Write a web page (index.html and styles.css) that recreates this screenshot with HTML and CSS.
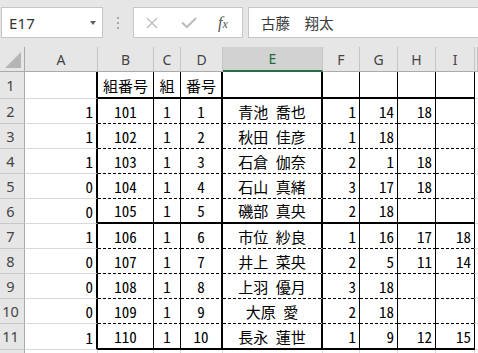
FILE: index.html
```html
<!DOCTYPE html>
<html lang="ja">
<head>
<meta charset="utf-8">
<link rel="stylesheet" href="styles.css">
</head>
<body>
<div class="app">
  <div class="fbar">
    <div class="namebox"><span class="ref">E17</span><span class="dd"></span></div>
    <div class="grip"><i></i><i></i><i></i></div>
    <div class="btns">
      <svg class="ic" width="12" height="12" viewBox="0 0 12 12"><path d="M1 1L11 11M11 1L1 11" stroke="#bdbdbd" stroke-width="1.4" fill="none"/></svg>
      <svg class="ic" width="16" height="12" viewBox="0 0 16 12"><path d="M1 5.5L6 10L15 1" stroke="#bdbdbd" stroke-width="2" fill="none"/></svg>
      <span class="fx"><i>f</i><i class="x">x</i></span>
    </div>
    <div class="formula">古藤　翔太</div>
  </div>

  <div class="sheet">
    <div class="row hdr">
      <div class="c corner"></div>
      <div class="c ch">A</div><div class="c ch">B</div><div class="c ch">C</div><div class="c ch">D</div>
      <div class="c ch sel">E</div><div class="c ch">F</div><div class="c ch">G</div><div class="c ch">H</div><div class="c ch">I</div><div class="c ch"></div>
    </div>
    <div class="row r1">
      <div class="c rh">1</div>
      <div class="c tk bg"></div><div class="c tn bt ctr">組番号</div><div class="c tn bt ctr">組</div><div class="c tk bt ctr">番号</div>
      <div class="c tk bt"></div><div class="c tn bt"></div><div class="c tn bt"></div><div class="c tn bt"></div><div class="c tn bt"></div><div class="c"></div>
    </div>
    <div class="row">
      <div class="c rh">2</div>
      <div class="c tk rt">1</div><div class="c tn bd ctr">101</div><div class="c tn bd ctr">1</div><div class="c tk bd ctr">1</div>
      <div class="c tk bd ctr">青池　喬也</div><div class="c tn bd rt">1</div><div class="c tn bd rt">14</div><div class="c tn bd rt">18</div><div class="c tn bd rt"></div><div class="c"></div>
    </div>
    <div class="row">
      <div class="c rh">3</div>
      <div class="c tk rt">1</div><div class="c tn bd ctr">102</div><div class="c tn bd ctr">1</div><div class="c tk bd ctr">2</div>
      <div class="c tk bd ctr">秋田　佳彦</div><div class="c tn bd rt">1</div><div class="c tn bd rt">18</div><div class="c tn bd rt"></div><div class="c tn bd rt"></div><div class="c"></div>
    </div>
    <div class="row">
      <div class="c rh">4</div>
      <div class="c tk rt">1</div><div class="c tn bd ctr">103</div><div class="c tn bd ctr">1</div><div class="c tk bd ctr">3</div>
      <div class="c tk bd ctr">石倉　伽奈</div><div class="c tn bd rt">2</div><div class="c tn bd rt">1</div><div class="c tn bd rt">18</div><div class="c tn bd rt"></div><div class="c"></div>
    </div>
    <div class="row">
      <div class="c rh">5</div>
      <div class="c tk rt">0</div><div class="c tn bd ctr">104</div><div class="c tn bd ctr">1</div><div class="c tk bd ctr">4</div>
      <div class="c tk bd ctr">石山　真緒</div><div class="c tn bd rt">3</div><div class="c tn bd rt">17</div><div class="c tn bd rt">18</div><div class="c tn bd rt"></div><div class="c"></div>
    </div>
    <div class="row">
      <div class="c rh">6</div>
      <div class="c tk rt">0</div><div class="c tn bt ctr">105</div><div class="c tn bt ctr">1</div><div class="c tk bt ctr">5</div>
      <div class="c tk bt ctr">磯部　真央</div><div class="c tn bt rt">2</div><div class="c tn bt rt">18</div><div class="c tn bt rt"></div><div class="c tn bt rt"></div><div class="c"></div>
    </div>
    <div class="row">
      <div class="c rh">7</div>
      <div class="c tk rt">1</div><div class="c tn bd ctr">106</div><div class="c tn bd ctr">1</div><div class="c tk bd ctr">6</div>
      <div class="c tk bd ctr">市位　紗良</div><div class="c tn bd rt">1</div><div class="c tn bd rt">16</div><div class="c tn bd rt">17</div><div class="c tn bd rt">18</div><div class="c"></div>
    </div>
    <div class="row">
      <div class="c rh">8</div>
      <div class="c tk rt">0</div><div class="c tn bd ctr">107</div><div class="c tn bd ctr">1</div><div class="c tk bd ctr">7</div>
      <div class="c tk bd ctr">井上　菜央</div><div class="c tn bd rt">2</div><div class="c tn bd rt">5</div><div class="c tn bd rt">11</div><div class="c tn bd rt">14</div><div class="c"></div>
    </div>
    <div class="row">
      <div class="c rh">9</div>
      <div class="c tk rt">0</div><div class="c tn bd ctr">108</div><div class="c tn bd ctr">1</div><div class="c tk bd ctr">8</div>
      <div class="c tk bd ctr">上羽　優月</div><div class="c tn bd rt">3</div><div class="c tn bd rt">18</div><div class="c tn bd rt"></div><div class="c tn bd rt"></div><div class="c"></div>
    </div>
    <div class="row">
      <div class="c rh">10</div>
      <div class="c tk rt">0</div><div class="c tn bd ctr">109</div><div class="c tn bd ctr">1</div><div class="c tk bd ctr">9</div>
      <div class="c tk bd ctr">大原　愛</div><div class="c tn bd rt">2</div><div class="c tn bd rt">18</div><div class="c tn bd rt"></div><div class="c tn bd rt"></div><div class="c"></div>
    </div>
    <div class="row r11">
      <div class="c rh">11</div>
      <div class="c tk rt">1</div><div class="c tn bt ctr">110</div><div class="c tn bt ctr">1</div><div class="c tk bt ctr">10</div>
      <div class="c tk bt ctr">長永　蓮世</div><div class="c tn bt rt">1</div><div class="c tn bt rt">9</div><div class="c tn bt rt">12</div><div class="c tn bt rt">15</div><div class="c"></div>
    </div>
    <div class="row">
      <div class="c rh"></div>
      <div class="c"></div><div class="c"></div><div class="c"></div><div class="c"></div>
      <div class="c"></div><div class="c"></div><div class="c"></div><div class="c"></div><div class="c"></div><div class="c"></div>
    </div>
  </div>
</div>
</body>
</html>
```

FILE: styles.css
```css
html, body {
  margin: 0;
  padding: 0;
  background: #ffffff;
  overflow: hidden;
}

.app {
  width: 478px;
  height: 353px;
  overflow: hidden;
  font-family: "Noto Sans", "Open Sans", sans-serif;
}

/* ---------- formula bar ---------- */
.fbar {
  height: 47px;
  box-sizing: border-box;
  padding-top: 7px;
  background: #e6e6e6;
  display: flex;
  align-items: flex-start;
}

.namebox {
  margin-left: 1px;
  width: 102px;
  height: 31px;
  box-sizing: border-box;
  border: 1px solid #c6c6c6;
  background: #fff;
  display: flex;
  align-items: center;
  justify-content: space-between;
  padding: 0 6px 0 7px;
}

.ref {
  font-size: 15px;
  color: #333;
  letter-spacing: 0.2px;
}

.dd {
  width: 0;
  height: 0;
  border-left: 3.5px solid transparent;
  border-right: 3.5px solid transparent;
  border-top: 4px solid #606060;
  margin-top: 1px;
}

.grip {
  width: 30px;
  height: 31px;
  display: flex;
  flex-direction: column;
  align-items: center;
  justify-content: center;
  gap: 3px;
}

.grip i {
  width: 2px;
  height: 2px;
  background: #a8a8a8;
}

.btns {
  width: 110px;
  height: 31px;
  box-sizing: border-box;
  border: 1px solid #c6c6c6;
  background: #fff;
  display: flex;
  align-items: center;
  padding-left: 12px;
  gap: 23px;
}

.btns .ic {
  display: block;
}

.fx {
  font-family: "Liberation Serif", serif;
  font-style: italic;
  color: #555;
  font-size: 16px;
  line-height: 1;
  margin-left: -2px;
}

.fx i {
  font-style: italic;
}

.fx .x {
  font-size: 12px;
}

.formula {
  flex: 1;
  margin-left: 5px;
  height: 31px;
  box-sizing: border-box;
  border: 1px solid #c6c6c6;
  border-right: none;
  background: #fff;
  display: flex;
  align-items: center;
  padding-left: 12px;
  font-family: "Noto Sans CJK JP", sans-serif;
  font-size: 14.5px;
  color: #3c3c3c;
}

/* ---------- sheet ---------- */
.row {
  display: grid;
  grid-template-columns: 25px 73px 56px 27px 42px 100px 37px 38px 38px 39px 1fr;
  height: 25px;
}

.row.hdr { height: 25px; }
.row.r1 { height: 27px; }
.row.r11 { height: 26px; }

.c {
  box-sizing: border-box;
  border-right: 1px solid #d9d9d9;
  border-bottom: 1px solid #d9d9d9;
  display: flex;
  align-items: flex-end;
  padding: 0 3px 4px;
  overflow: hidden;
  white-space: nowrap;
  font-family: "Noto Sans CJK JP", sans-serif;
  font-feature-settings: "hwid";
  font-size: 15px;
  line-height: 15px;
  color: #000;
  background-color: #fff;
}

.ctr { justify-content: center; }
.rt { justify-content: flex-end; }

/* headers */
.ch, .rh, .corner {
  background-color: #e6e6e6;
  font-family: "Noto Sans", "Open Sans", sans-serif;
  font-feature-settings: normal;
  color: #444;
  font-size: 14px;
  justify-content: center;
  align-items: center;
  padding: 0;
}

.ch {
  border-right-color: #c4c4c4;
  border-bottom-color: #ababab;
}

.ch.sel {
  background-color: #d2d2d2;
  color: #1e6b41;
  border-bottom: 2px solid #217346;
}

.rh {
  border-right-color: #ababab;
  border-bottom-color: #c8c8c8;
  padding-right: 3px;
  font-size: 14.5px;
}

.corner {
  position: relative;
  border-right-color: #ababab;
  border-bottom-color: #ababab;
}

.corner::after {
  content: "";
  position: absolute;
  right: 3px;
  bottom: 3px;
  width: 16px;
  height: 16px;
  background: #b5b5b5;
  clip-path: polygon(100% 0, 100% 100%, 0 100%);
}

/* table borders */
.tk { border-right: 2px solid #000; }
.tn { border-right: 1px solid #000; }
.bt { border-bottom: 2px solid #000; }

.bd {
  border-bottom-color: transparent;
  background-image: repeating-linear-gradient(90deg, #000 0 3px, transparent 3px 5px);
  background-size: 100% 1px;
  background-position: left bottom;
  background-repeat: no-repeat;
  background-origin: border-box;
}

.bg { border-bottom-color: #d9d9d9; }
```
